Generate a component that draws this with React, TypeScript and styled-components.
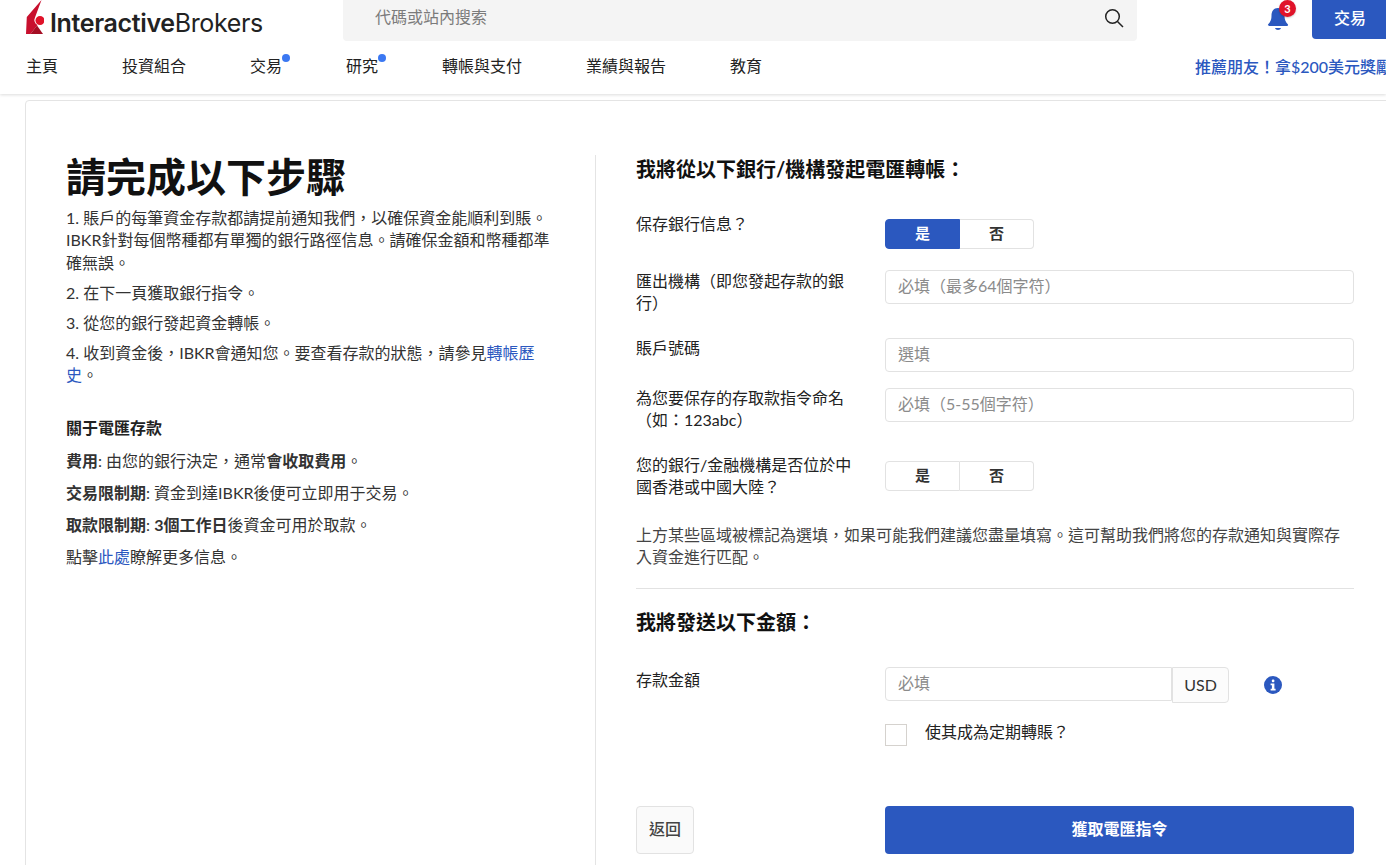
import React from "react";
import styled, { createGlobalStyle } from "styled-components";

const Global = createGlobalStyle`
  html, body { margin: 0; padding: 0; background: #fff; }
  #root { width: 1386px; height: 865px; overflow: hidden; }
  * { box-sizing: border-box; }
  body { font-family: "Lato", "Noto Sans CJK TC", sans-serif; color: #333; font-size: 16px; }
`;

const blue = "#2b58bf";

const Page = styled.div`
  width: 1386px;
  height: 865px;
  overflow: hidden;
  display: flex;
  flex-direction: column;
`;
const Header = styled.header`
  height: 94px;
  flex: none;
  background: #fff;
  box-shadow: 0 1px 3px rgba(0, 0, 0, 0.14);
  display: flex;
  flex-direction: column;
`;
const TopBar = styled.div`
  height: 41px;
  display: flex;
  align-items: flex-start;
  padding-left: 26px;
`;
const LogoLink = styled.div`
  width: 317px;
  height: 38px;
  display: flex;
  align-items: flex-end;
  flex: none;
`;
const LogoMark = styled.svg`
  flex: none;
  align-self: flex-start;
`;
const LogoWord = styled.span`
  font-family: "Inter", sans-serif;
  font-size: 25px;
  line-height: 30px;
  letter-spacing: -0.35px;
  color: #222;
  margin-left: 6px;
  font-weight: 400;
  b { font-weight: 600; }
`;
const Search = styled.div`
  width: 794px;
  height: 41px;
  flex: none;
  background: #f4f4f4;
  border-radius: 0 0 4px 4px;
  display: flex;
  align-items: center;
  justify-content: space-between;
  padding: 0 13px 6px 32px;
  color: #7b7b7b;
  font-size: 16px;
`;
const SearchHint = styled.span`
  margin-top: -4px;
`;
const BellWrap = styled.div`
  position: relative;
  margin-left: 129px;
  margin-top: 6px;
  width: 24px;
  height: 26px;
  flex: none;
`;
const Badge = styled.span`
  position: absolute;
  left: 13px;
  top: -6px;
  width: 17px;
  height: 17px;
  border-radius: 50%;
  background: #e0132a;
  color: #fff;
  font-size: 11px;
  font-weight: 700;
  line-height: 17px;
  text-align: center;
  box-shadow: 0 1px 2px rgba(0, 0, 0, 0.2);
`;
const TradeButton = styled.button`
  margin-left: 22px;
  width: 74px;
  height: 39px;
  flex: none;
  background: ${blue};
  color: #fff;
  border: 0;
  border-radius: 0 0 0 4px;
  font: 500 16px "Lato", "Noto Sans CJK TC", sans-serif;
  padding: 0 0 6px 2px;
`;
const Nav = styled.nav`
  display: flex;
  align-items: center;
  height: 50px;
  padding: 0 0 0 26px;
  margin-bottom: 3px;
  gap: 64px;
`;
const NavItem = styled.span<{ $dot?: boolean }>`
  position: relative;
  font-size: 16px;
  line-height: 22px;
  color: #222;
  flex: none;
  ${(p) =>
    p.$dot &&
    `&::after { content: ""; position: absolute; right: -8px; top: -1px; width: 8px; height: 8px; border-radius: 50%; background: #3b78f2; }`}
`;
const Promo = styled.a`
  margin-left: auto;
  width: 191px;
  flex: none;
  white-space: nowrap;
  color: ${blue};
  font-size: 16px;
  font-weight: 500;
`;
const Card = styled.main`
  margin: 6px 0 0 25px;
  width: 1400px;
  height: 800px;
  flex: none;
  background: #fff;
  border: 1px solid #e4e4e4;
  border-radius: 4px 0 0 0;
  padding-top: 54px;
  display: flex;
  align-items: stretch;
`;
const LeftCol = styled.section`
  width: 570px;
  flex: none;
  padding: 0 44px 0 40px;
  border-right: 1px solid #e4e4e4;
`;
const Title = styled.h1`
  margin: 0 0 8px;
  font-size: 40px;
  line-height: 44px;
  font-weight: 700;
  color: #111;
`;
const Step = styled.p`
  margin: 0 0 7.6px;
  font-size: 16px;
  line-height: 22.4px;
  color: #333;
`;
const Link = styled.a`
  color: ${blue};
`;
const SubTitle = styled.h3`
  margin: 30.6px 0 10.600px;
  font-size: 16px;
  line-height: 22px;
  font-weight: 700;
  color: #222;
`;
const Fact = styled.p`
  margin: 0 0 9.6px;
  font-size: 16px;
  line-height: 22.4px;
  color: #333;
  b { font-weight: 700; }
`;
const RightCol = styled.section`
  flex: none;
  padding-left: 40px;
  width: 758px;
`;
const SectionTitle = styled.h2<{ $mt?: number }>`
  margin: ${(p) => p.$mt ?? 0}px 0 0;
  font-size: 20px;
  line-height: 28px;
  font-weight: 700;
  color: #111;
`;
const Row = styled.div<{ $mt: number }>`
  display: grid;
  grid-template-columns: 249px 469px;
  margin-top: ${(p) => p.$mt}px;
  width: 718px;
`;
const Label = styled.label<{ $shift?: number }>`
  width: 220px;
  font-size: 16px;
  line-height: 22px;
  color: #222;
  display: block;
  margin-top: ${(p) => p.$shift ?? 0}px;
`;
const Toggle = styled.div`
  display: flex;
  width: 149px;
  height: 30px;
`;
const ToggleOption = styled.button<{ $on?: boolean; $side: "l" | "r" }>`
  flex: 1;
  padding: 0 0 3px;
  font: 700 15px "Lato", "Noto Sans CJK TC", sans-serif;
  background: ${(p) => (p.$on ? blue : "#fff")};
  color: ${(p) => (p.$on ? "#fff" : "#333")};
  border: 1px solid ${(p) => (p.$on ? blue : "#e2e2e2")};
  border-left-width: ${(p) => (p.$side === "r" && !p.$on ? 0 : 1)}px;
  border-radius: ${(p) => (p.$side === "l" ? "4px 0 0 4px" : "0 4px 4px 0")};
`;
const Field = styled.input`
  width: 100%;
  height: 34px;
  padding: 0 12px 4px;
  border: 1px solid #e2e2e2;
  border-radius: 4px;
  background: #fff;
  font: 400 16px "Lato", "Noto Sans CJK TC", sans-serif;
  color: #333;
  outline: none;
  &::placeholder { color: #8b8b8b; opacity: 1; }
`;
const Note = styled.p`
  margin: 26px 0 0;
  width: 710px;
  font-size: 16px;
  line-height: 22px;
  color: #444;
`;
const Rule = styled.hr`
  margin: 20px 0 0;
  width: 718px;
  border: 0;
  border-top: 1px solid #e2e2e2;
`;
const AmountBox = styled.div`
  display: flex;
  align-items: flex-start;
`;
const AmountField = styled(Field)`
  width: 287px;
  border-radius: 4px 0 0 4px;
`;
const Currency = styled.span`
  width: 57px;
  height: 36px;
  flex: none;
  border: 1px solid #e2e2e2;
  border-radius: 0 4px 4px 0;
  background: #fcfcfc;
  font-size: 16px;
  line-height: 34px;
  text-align: center;
  color: #333;
`;
const InfoIcon = styled.svg`
  width: 18px;
  height: 18px;
  margin: 9px 0 0 35px;
  flex: none;
`;
const CheckLine = styled.div`
  display: flex;
  align-items: flex-start;
`;
const Check = styled.span`
  width: 22px;
  height: 22px;
  flex: none;
  border: 1px solid #d5d2ce;
  background: #fff;
`;
const CheckText = styled.span`
  margin-left: 18px;
  font-size: 16px;
  line-height: 16px;
  color: #222;
`;
const Actions = styled.div`
  display: grid;
  grid-template-columns: 249px 469px;
  margin-top: 60px;
  width: 718px;
`;
const BackButton = styled.button`
  width: 58px;
  height: 48px;
  background: #fafafa;
  border: 1px solid #e2e2e2;
  border-radius: 4px;
  font: 500 16px "Lato", "Noto Sans CJK TC", sans-serif;
  color: #444;
  padding: 0 0 4px;
`;
const Submit = styled.button`
  height: 48px;
  background: ${blue};
  border: 0;
  border-radius: 4px;
  color: #fff;
  font: 700 16px "Lato", "Noto Sans CJK TC", sans-serif;
  padding: 0 0 4px;
`;

const Logo = () => (
  <LogoMark width="18" height="35" viewBox="0 0 18 35">
    <path d="M15.500 0 L0.800 17 L0 34 H4.500 L11.500 25 A5.500 5.500 0 0 1 9 17.500 Z" fill="#c8102e" />
    <path d="M11 25.500 L17 34 H4.500 Z" fill="#a50f25" />
    <circle cx="14" cy="20.500" r="4.500" fill="#e0132a" />
  </LogoMark>
);

export default function App() {
  return (
    <Page>
      <Global />
      <Header>
        <TopBar>
          <LogoLink>
            <Logo />
            <LogoWord>
              <b>Interactive</b>Brokers
            </LogoWord>
          </LogoLink>
          <Search>
            <SearchHint>代碼或站內搜索</SearchHint>
            <svg width="20" height="20" viewBox="0 0 20 20" fill="none" stroke="#222" strokeWidth="1.5">
              <circle cx="8.5" cy="8.5" r="6.8" />
              <path d="M13.5 13.5 L19 19" />
            </svg>
          </Search>
          <BellWrap>
            <svg width="24" height="26" viewBox="0 0 24 26" fill={blue}>
              <path d="M12 2c-4.500 0-6.500 3.500-6.500 7.500 0 4-1 6.500-3.300 8.800-.6.7-.3 1.700.8 1.700h18c1.100 0 1.400-1 .8-1.700-2.300-2.300-3.300-4.800-3.300-8.800C18.500 5.500 16.500 2 12 2z" />
              <path d="M9 22h6c-.5 2.500-5.500 2.500-6 0z" />
            </svg>
            <Badge>3</Badge>
          </BellWrap>
          <TradeButton>交易</TradeButton>
        </TopBar>
        <Nav>
          <NavItem>主頁</NavItem>
          <NavItem>投資組合</NavItem>
          <NavItem $dot>交易</NavItem>
          <NavItem $dot>研究</NavItem>
          <NavItem>轉帳與支付</NavItem>
          <NavItem>業績與報告</NavItem>
          <NavItem>教育</NavItem>
          <Promo>推薦朋友！拿$200美元獎勵</Promo>
        </Nav>
      </Header>
      <Card>
        <LeftCol>
          <Title>請完成以下步驟</Title>
          <Step>1. 賬戶的每筆資金存款都請提前通知我們，以確保資金能順利到賬。IBKR針對每個幣種都有單獨的銀行路徑信息。請確保金額和幣種都準確無誤。</Step>
          <Step>2. 在下一頁獲取銀行指令。</Step>
          <Step>3. 從您的銀行發起資金轉帳。</Step>
          <Step>4. 收到資金後，IBKR會通知您。要查看存款的狀態，請參見<Link>轉帳歷<br />史</Link>。</Step>
          <SubTitle>關于電匯存款</SubTitle>
          <Fact><b>費用</b>: 由您的銀行決定，通常<b>會收取費用</b>。</Fact>
          <Fact><b>交易限制期</b>: 資金到達IBKR後便可立即用于交易。</Fact>
          <Fact><b>取款限制期</b>: <b>3個工作日</b>後資金可用於取款。</Fact>
          <Fact>點擊<Link>此處</Link>瞭解更多信息。</Fact>
        </LeftCol>
        <RightCol>
          <SectionTitle>我將從以下銀行/機構發起電匯轉帳：</SectionTitle>
          <Row $mt={36}>
            <Label $shift={-6}>保存銀行信息？</Label>
            <Toggle>
              <ToggleOption $on $side="l">是</ToggleOption>
              <ToggleOption $side="r">否</ToggleOption>
            </Toggle>
          </Row>
          <Row $mt={21}>
            <Label>匯出機構（即您發起存款的銀行）</Label>
            <Field placeholder="必填（最多64個字符）" />
          </Row>
          <Row $mt={24}>
            <Label $shift={-1}>賬戶號碼</Label>
            <Field placeholder="選填" />
          </Row>
          <Row $mt={16}>
            <Label $shift={-1}>為您要保存的存取款指令命名（如：123abc）</Label>
            <Field placeholder="必填（5-55個字符）" />
          </Row>
          <Row $mt={30}>
            <Label $shift={-7}>您的銀行/金融機構是否位於中國香港或中國大陸？</Label>
            <Toggle>
              <ToggleOption $side="l">是</ToggleOption>
              <ToggleOption $side="r">否</ToggleOption>
            </Toggle>
          </Row>
          <Note>上方某些區域被標記為選填，如果可能我們建議您盡量填寫。這可幫助我們將您的存款通知與實際存入資金進行匹配。</Note>
          <Rule />
          <SectionTitle $mt={19}>我將發送以下金額：</SectionTitle>
          <Row $mt={31}>
            <Label $shift={2}>存款金額</Label>
            <AmountBox>
              <AmountField placeholder="必填" />
              <Currency>USD</Currency>
              <InfoIcon viewBox="0 0 18 18">
                <circle cx="9" cy="9" r="9" fill={blue} />
                <rect x="7.800" y="3.600" width="2.600" height="2.600" rx="1" fill="#fff" />
                <path d="M6.600 7.500h3.800v5.200h1.200v1.700H6.600v-1.700h1.300V9.200H6.600z" fill="#fff" />
              </InfoIcon>
            </AmountBox>
          </Row>
          <Row $mt={21}>
            <span />
            <CheckLine>
              <Check />
              <CheckText>使其成為定期轉賬？</CheckText>
            </CheckLine>
          </Row>
          <Actions>
            <BackButton>返回</BackButton>
            <Submit>獲取電匯指令</Submit>
          </Actions>
        </RightCol>
      </Card>
    </Page>
  );
}
